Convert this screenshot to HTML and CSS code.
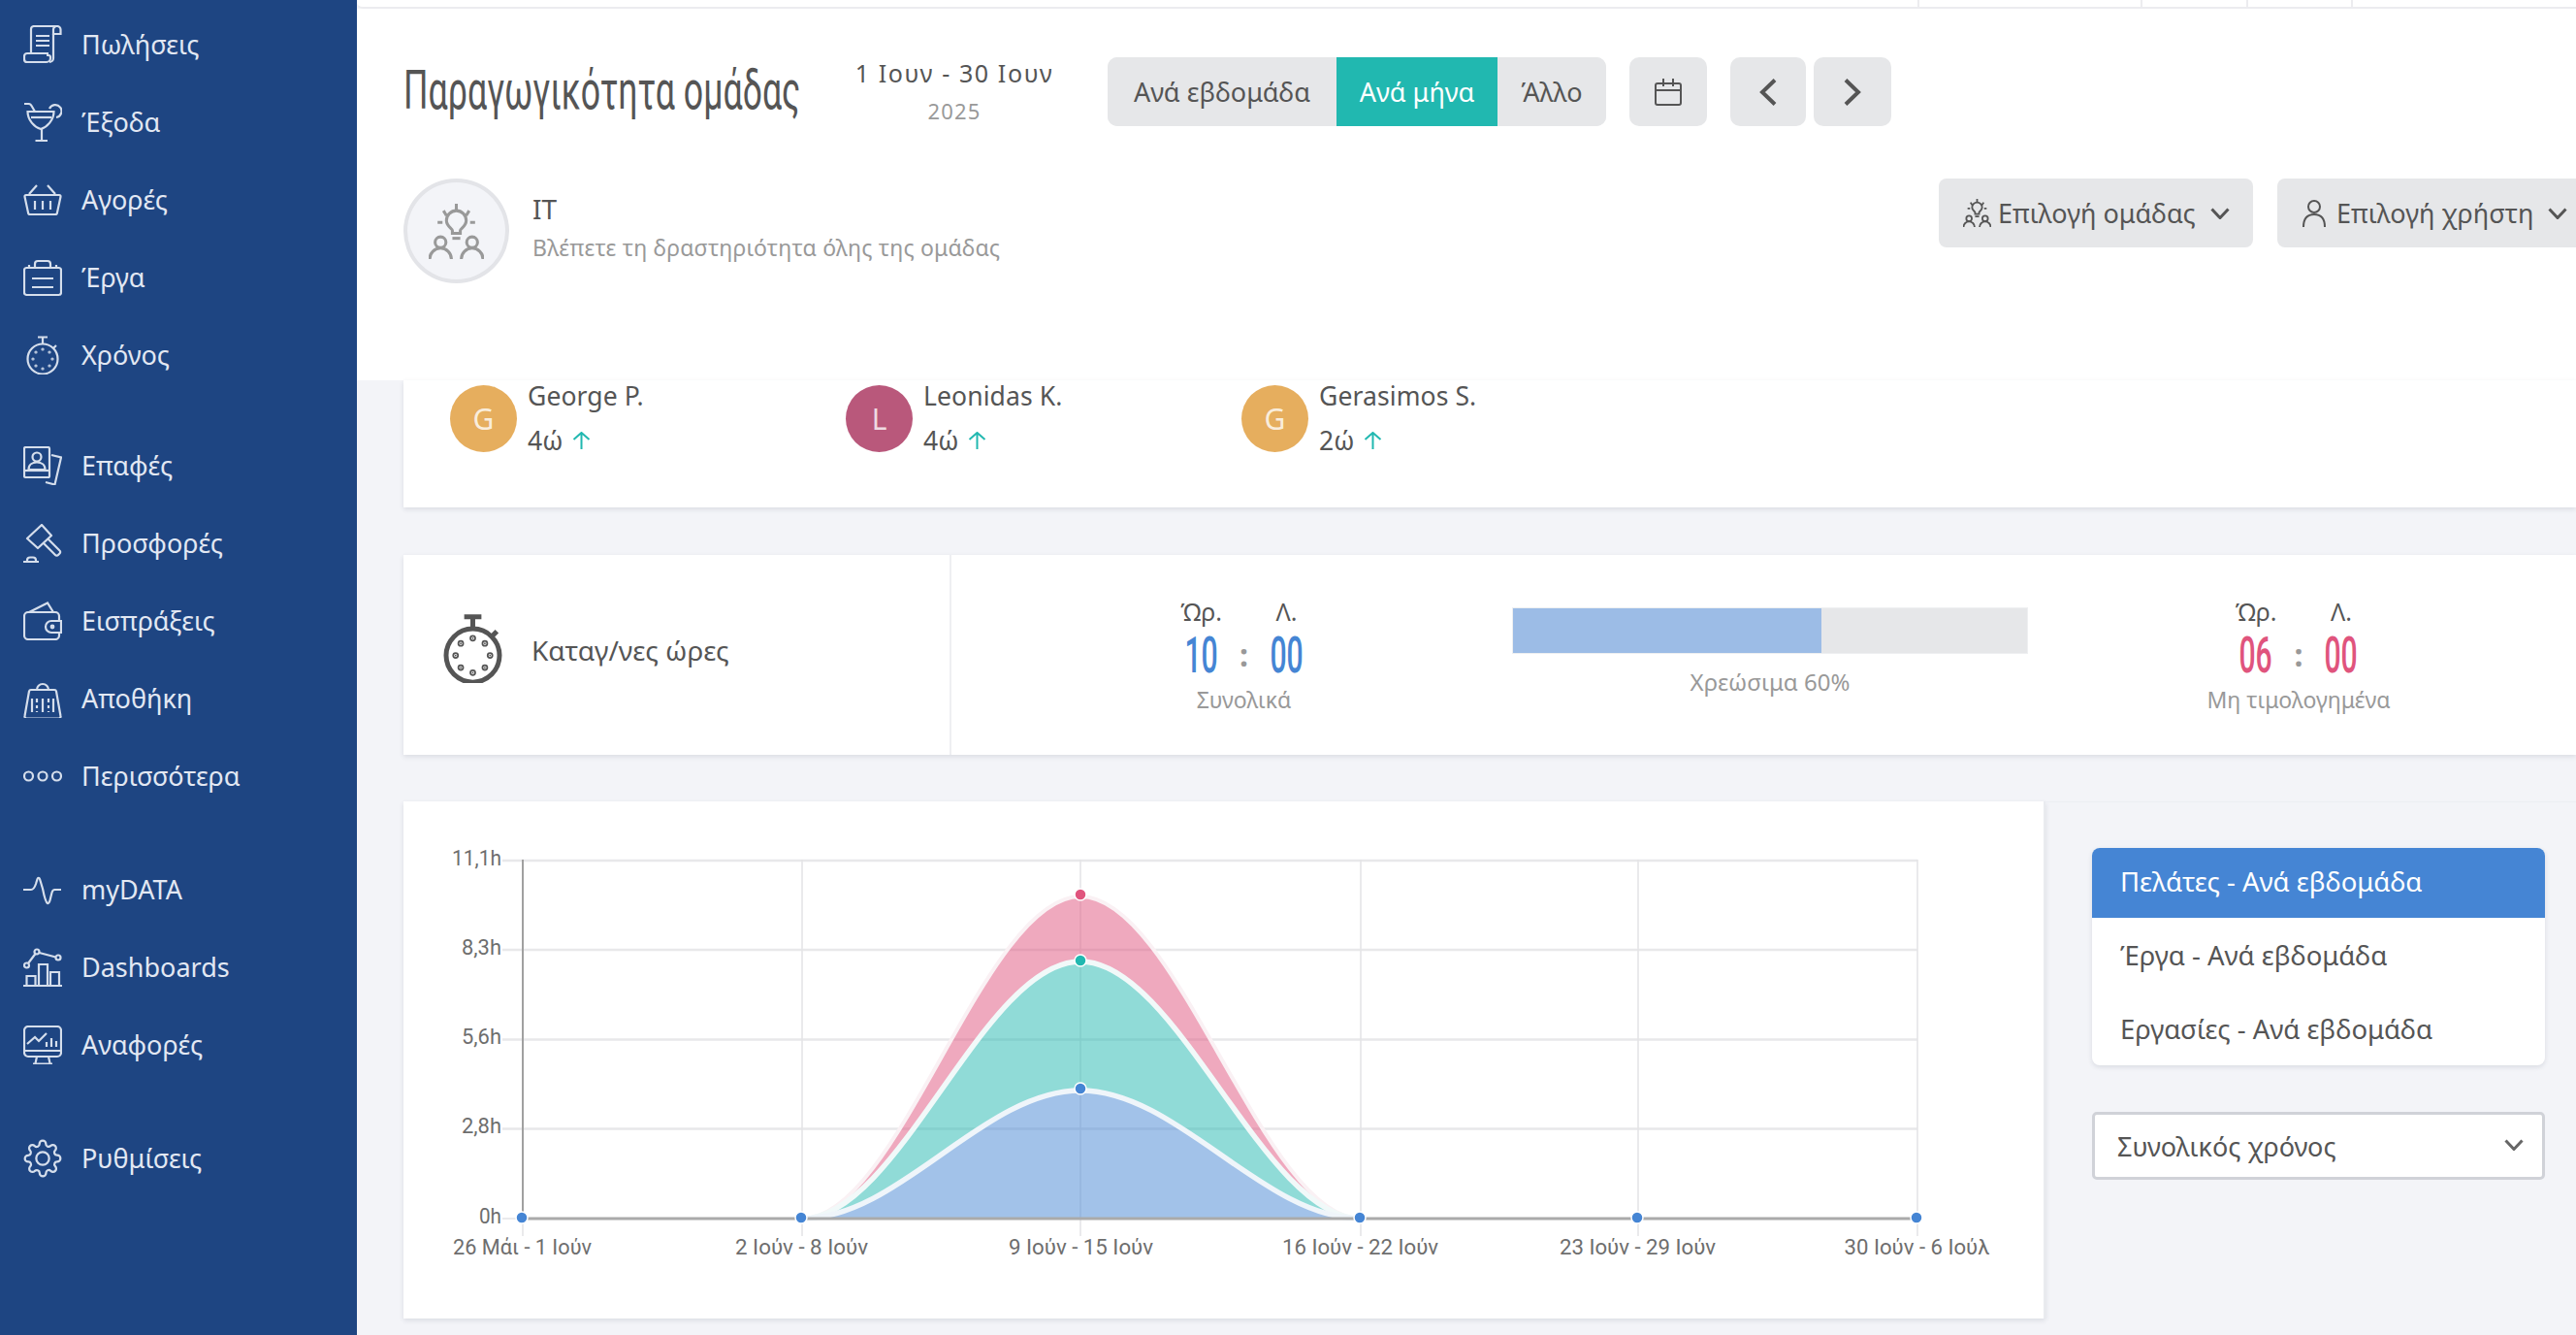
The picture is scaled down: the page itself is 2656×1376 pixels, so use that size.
FILE: index.html
```html
<!DOCTYPE html>
<html lang="el">
<head>
<meta charset="utf-8">
<title>Παραγωγικότητα ομάδας</title>
<link rel="stylesheet" href="styles.css">
</head>
<body>
<svg class="sprite" aria-hidden="true">
  <symbol id="i-scroll" viewBox="0 0 40 40"><path d="M8 28V4a3 3 0 0 1 3-3h24a3.5 3.5 0 0 1 3.5 3.5V9H31V4.5A3.5 3.5 0 0 1 35 1"/><path d="M31 9v25a4 4 0 0 1-4 4"/><path d="M26 29H4a3 3 0 0 0-3 3v3a3 3 0 0 0 3 3h20a4 4 0 0 0 4-4v-1a2 2 0 0 0-2-2h-2"/><path d="M13 11h14M13 16h14M13 21h14"/></symbol>
  <symbol id="i-cocktail" viewBox="0 0 40 40"><path d="M1 1h4a4 4 0 0 1 3.500 2l3.500 6"/><path d="M4.500 9h27c0 9-7 16-13.500 18C11.500 25 4.500 18 4.500 9z"/><path d="M8 15h21"/><path d="M19 27v12M12.500 39h12.500"/><path d="M27 6a6.500 6.500 0 1 1 7 9"/></symbol>
  <symbol id="i-basket" viewBox="0 0 40 40"><path d="M14 5L6 14M25 5l8 9"/><path d="M3 15h34a1.500 1.500 0 0 1 1.500 1.800L35 33a2 2 0 0 1-2 2H7a2 2 0 0 1-2-2L1.500 16.800A1.500 1.500 0 0 1 3 15z"/><path d="M12 21v9M20 21v9M28 21v9"/></symbol>
  <symbol id="i-case" viewBox="0 0 40 40"><rect x="1" y="10" width="38" height="28" rx="2.500"/><path d="M12 10V6a3 3 0 0 1 3-3h10a3 3 0 0 1 3 3v4"/><path d="M6 7v3M34 7v3M9 21h22M9 30h22"/></symbol>
  <symbol id="i-timer" viewBox="0 0 40 40"><circle cx="20" cy="24" r="15.500"/><path d="M15 1.500h10M20 1.500v7M31 13l3-3"/><g fill="currentColor"><circle cx="20" cy="14" r=".5"/><circle cx="27" cy="17" r=".5"/><circle cx="30" cy="24" r=".5"/><circle cx="27" cy="31" r=".5"/><circle cx="20" cy="34" r=".5"/><circle cx="13" cy="31" r=".5"/><circle cx="10" cy="24" r=".5"/><circle cx="13" cy="17" r=".5"/></g></symbol>
  <symbol id="i-contacts" viewBox="0 0 40 40"><rect x="1" y="1" width="26" height="31" rx="1.500"/><circle cx="14" cy="11" r="4.500"/><path d="M5.500 24c0-5 4-7.500 8.500-7.500s8.500 2.500 8.500 7.500z"/><path d="M1 25h26"/><path d="M29 9l10 2.500-6.500 28-9.500-2.500"/></symbol>
  <symbol id="i-gavel" viewBox="0 0 40 40"><path d="M19 1l10 11-14 13L4 15z" stroke-linejoin="round"/><path d="M21 20l12 12a2 2 0 0 0 3 0l1.500-1.500a2 2 0 0 0 0-3L25 15"/><path d="M0 39h16M4 39v-1.500a3 3 0 0 1 3-3h3a3 3 0 0 1 3 3V39"/></symbol>
  <symbol id="i-wallet" viewBox="0 0 40 40"><path d="M37 20v-5a4 4 0 0 0-4-4H5a4 4 0 0 0-4 4v20a4 4 0 0 0 4 4h28a4 4 0 0 0 4-4v-3"/><path d="M39 20H29a6 6 0 0 0 0 12h10z"/><circle cx="30" cy="26" r="1.300"/><path d="M6 11L25 1.500 31 11"/></symbol>
  <symbol id="i-store" viewBox="0 0 40 40"><path d="M14 11a6 6 0 0 1 12 0"/><path d="M8 11h24a2 2 0 0 1 2 1.500L38.500 38a2 2 0 0 1-2 2.500h-33a2 2 0 0 1-2-2.500L6 12.500A2 2 0 0 1 8 11z"/><path d="M9 20v14M14 20v4M14 27v3M14 33v1M20 20v14M26 20v4M26 27v3M26 33v1M31 20v14"/></symbol>
  <symbol id="i-dots" viewBox="0 0 40 40"><circle cx="5.500" cy="20" r="4.500"/><circle cx="20" cy="20" r="4.500"/><circle cx="34.500" cy="20" r="4.500"/></symbol>
  <symbol id="i-pulse" viewBox="0 0 40 40"><path d="M0 20h8c3 0 4-3 5-6l1.500-5c.5-1.500 2-1.500 2.500 0l3 10c1 5 3 14 5 15 1 .5 2-1 2.500-3l2-8c.5-2 1-3 3-3h6.500"/></symbol>
  <symbol id="i-dash" viewBox="0 0 40 40"><path d="M0 39h40"/><path d="M3.500 39V29h9v10M16 39V17h9v22M28 39V25h9v14"/><circle cx="3.500" cy="18" r="2.500"/><circle cx="14" cy="4" r="2.500"/><circle cx="36" cy="10" r="2.500"/><path d="M5 16l7.500-10M16.500 5L33.500 9.500"/></symbol>
  <symbol id="i-report" viewBox="0 0 40 40"><rect x="1" y="1" width="38" height="31" rx="4"/><path d="M1 26h38M14 32l-1.500 7M26 32l1.500 7M10 39.500h20"/><path d="M4 19l8-7 4 4 8-8"/><path d="M24 22v-5M29 22v-9M34 22v-6"/></symbol>
  <symbol id="i-gear" viewBox="0 0 24 24"><circle cx="12" cy="12" r="4"/><path d="M19.400 15a1.650 1.650 0 0 0 .33 1.820l.06.06a2 2 0 0 1 0 2.830 2 2 0 0 1-2.830 0l-.06-.06a1.650 1.650 0 0 0-1.820-.33 1.650 1.650 0 0 0-1 1.510V21a2 2 0 0 1-2 2 2 2 0 0 1-2-2v-.09A1.650 1.650 0 0 0 9 19.400a1.650 1.650 0 0 0-1.820.33l-.06.06a2 2 0 0 1-2.830 0 2 2 0 0 1 0-2.830l.06-.06a1.650 1.650 0 0 0 .33-1.820 1.650 1.650 0 0 0-1.510-1H3a2 2 0 0 1-2-2 2 2 0 0 1 2-2h.09A1.650 1.650 0 0 0 4.600 9a1.650 1.650 0 0 0-.33-1.820l-.06-.06a2 2 0 0 1 0-2.830 2 2 0 0 1 2.830 0l.06.06a1.650 1.650 0 0 0 1.820.33H9a1.650 1.650 0 0 0 1-1.510V3a2 2 0 0 1 2-2 2 2 0 0 1 2 2v.09a1.650 1.650 0 0 0 1 1.510 1.650 1.650 0 0 0 1.820-.33l.06-.06a2 2 0 0 1 2.830 0 2 2 0 0 1 0 2.830l-.06.06a1.650 1.650 0 0 0-.33 1.820V9a1.650 1.650 0 0 0 1.510 1H21a2 2 0 0 1 2 2 2 2 0 0 1-2 2h-.09a1.650 1.650 0 0 0-1.510 1z"/></symbol>
  <symbol id="i-team" viewBox="0 0 56 56"><path d="M28 0v6M15 7l3 5M41 7l-3 5M9 19h5M42 19h5"/><path d="M24 30v-3c0-2-6-4-6-10a10 10 0 0 1 20 0c0 6-6 8-6 10v3z"/><path d="M24 35h8"/><circle cx="12" cy="39" r="5.500"/><circle cx="44" cy="39" r="5.500"/><path d="M1 56c0-6 5-11 11-11s11 5 11 11M33 56c0-6 5-11 11-11s11 5 11 11"/></symbol>
  <symbol id="i-chev" viewBox="0 0 20 12"><path d="M1.500 1.500L10 10.500l8.500-9"/></symbol>
</svg>

<div class="app">
  <nav class="sidebar">
    <div class="nav-group first">
      <a class="nav-item"><svg class="ico"><use href="#i-scroll"/></svg><span>Πωλήσεις</span></a>
      <a class="nav-item"><svg class="ico"><use href="#i-cocktail"/></svg><span>Έξοδα</span></a>
      <a class="nav-item"><svg class="ico"><use href="#i-basket"/></svg><span>Αγορές</span></a>
      <a class="nav-item"><svg class="ico"><use href="#i-case"/></svg><span>Έργα</span></a>
      <a class="nav-item"><svg class="ico"><use href="#i-timer"/></svg><span>Χρόνος</span></a>
    </div>
    <div class="nav-group second">
      <a class="nav-item"><svg class="ico"><use href="#i-contacts"/></svg><span>Επαφές</span></a>
      <a class="nav-item"><svg class="ico"><use href="#i-gavel"/></svg><span>Προσφορές</span></a>
      <a class="nav-item"><svg class="ico"><use href="#i-wallet"/></svg><span>Εισπράξεις</span></a>
      <a class="nav-item"><svg class="ico"><use href="#i-store"/></svg><span>Αποθήκη</span></a>
      <a class="nav-item"><svg class="ico"><use href="#i-dots"/></svg><span>Περισσότερα</span></a>
    </div>
    <div class="nav-group third">
      <a class="nav-item"><svg class="ico"><use href="#i-pulse"/></svg><span>myDATA</span></a>
      <a class="nav-item"><svg class="ico"><use href="#i-dash"/></svg><span>Dashboards</span></a>
      <a class="nav-item"><svg class="ico"><use href="#i-report"/></svg><span>Αναφορές</span></a>
    </div>
    <div class="nav-group third">
      <a class="nav-item"><svg class="ico ico-gear"><use href="#i-gear"/></svg><span>Ρυθμίσεις</span></a>
    </div>
  </nav>

  <main class="main">
    <div class="topbar">
      <div class="topcell w230"></div>
      <div class="topcell w109"></div>
      <div class="topcell w108"></div>
      <div class="topcell w232"></div>
    </div>

    <header class="header">
      <div class="hrow">
        <div class="title-box"><h1 class="title">Παραγωγικότητα ομάδας</h1></div>
        <div class="period">
          <div class="period-range">1 Ιουν - 30 Ιουν</div>
          <div class="period-year">2025</div>
        </div>
        <div class="seg">
          <button class="seg-btn">Ανά εβδομάδα</button>
          <button class="seg-btn active">Ανά μήνα</button>
          <button class="seg-btn">Άλλο</button>
        </div>
        <button class="btn btn-cal"><svg class="cal" viewBox="0 0 28 28"><rect x="1" y="5" width="26" height="22" rx="2"/><path d="M1 12h26M9 0v8M19 0v8"/></svg></button>
        <button class="btn btn-prev"><svg class="arrow" viewBox="0 0 18 28"><path d="M16 1.500L3 14l13 12.500"/></svg></button>
        <button class="btn btn-next"><svg class="arrow" viewBox="0 0 18 28"><path d="M2 1.500L15 14 2 26.500"/></svg></button>
      </div>
      <div class="hrow second">
        <div class="team-badge"><svg class="team-ico"><use href="#i-team"/></svg></div>
        <div class="team-info">
          <div class="team-name">IT</div>
          <div class="team-desc">Βλέπετε τη δραστηριότητα όλης της ομάδας</div>
        </div>
        <div class="pick-group">
          <button class="pick"><svg class="pick-team"><use href="#i-team"/></svg><span>Επιλογή ομάδας</span><svg class="chev"><use href="#i-chev"/></svg></button>
          <button class="pick"><svg class="pick-user" viewBox="0 0 24 28"><circle cx="12" cy="7" r="6"/><path d="M1 28c0-10 5-13 11-13s11 3 11 13"/></svg><span>Επιλογή χρήστη</span><svg class="chev"><use href="#i-chev"/></svg></button>
        </div>
      </div>
    </header>

    <section class="content">
      <div class="card people">
        <div class="person"><div class="avatar amber">G</div><div class="pinfo"><div>George P.</div><div class="hours">4ώ<svg class="up" viewBox="0 0 19 18"><path d="M9.500 18V1M1.500 8l8-7 8 7"/></svg></div></div></div>
        <div class="person"><div class="avatar plum">L</div><div class="pinfo"><div>Leonidas K.</div><div class="hours">4ώ<svg class="up" viewBox="0 0 19 18"><path d="M9.500 18V1M1.500 8l8-7 8 7"/></svg></div></div></div>
        <div class="person"><div class="avatar amber">G</div><div class="pinfo"><div>Gerasimos S.</div><div class="hours">2ώ<svg class="up" viewBox="0 0 19 18"><path d="M9.500 18V1M1.500 8l8-7 8 7"/></svg></div></div></div>
      </div>

      <div class="card stats">
        <div class="stat-label"><svg class="ico stat-ico"><use href="#i-timer"/></svg><span class="stat-text">Καταγ/νες ώρες</span></div>
        <div class="time time-total">
          <div class="tl">Ώρ.</div><div></div><div class="tl">Λ.</div>
          <div class="tv blue"><span>10</span></div><div class="colon">:</div><div class="tv blue"><span>00</span></div>
          <div class="tc">Συνολικά</div>
        </div>
        <div class="billable">
          <div class="track"><div class="fill" style="width:60%"></div></div>
          <div class="bar-cap">Χρεώσιμα 60%</div>
        </div>
        <div class="time time-unbilled">
          <div class="tl">Ώρ.</div><div></div><div class="tl">Λ.</div>
          <div class="tv red"><span>06</span></div><div class="colon">:</div><div class="tv red"><span>00</span></div>
          <div class="tc">Μη τιμολογημένα</div>
        </div>
      </div>

      <div class="chart-row">
        <div class="chart-card">
          <svg class="chart" viewBox="416 826 1691 533">
            <g class="grid-h">
              <path d="M518 887H1977M518 979H1977M518 1071.500H1977M518 1163.500H1977"/>
            </g>
            <g class="grid-v">
              <path d="M539 1256V1274M827 886V1274M1114 886V1274M1403 886V1274M1689 886V1274M1977 886V1274M518 1256H539"/>
            </g>
            <path class="area a-blue" d="M827 1256C927 1256 1014 1124 1114 1124C1214 1124 1303 1256 1403 1256Z"/>
            <path class="area a-teal" d="M827 1256C927 1256 1014 991 1114 991C1214 991 1303 1256 1403 1256C1303 1256 1214 1124 1114 1124C1014 1124 927 1256 827 1256Z"/>
            <path class="area a-pink" d="M827 1256C927 1256 1014 924 1114 924C1214 924 1303 1256 1403 1256C1303 1256 1214 991 1114 991C1014 991 927 1256 827 1256Z"/>
            <path class="cline l-pink" d="M827 1256C927 1256 1014 924 1114 924C1214 924 1303 1256 1403 1256"/>
            <path class="cline l-teal" d="M827 1256C927 1256 1014 991 1114 991C1214 991 1303 1256 1403 1256"/>
            <path class="cline l-blue" d="M827 1256C927 1256 1014 1124 1114 1124C1214 1124 1303 1256 1403 1256"/>
            <path class="axis" d="M539 886V1256"/>
            <path class="baseline" d="M539 1256H1977"/>
            <g class="dot d-blue"><circle cx="538" cy="1255" r="6"/><circle cx="826" cy="1255" r="6"/><circle cx="1402" cy="1255" r="6"/><circle cx="1688" cy="1255" r="6"/><circle cx="1976" cy="1255" r="6"/><circle cx="1114" cy="1122" r="6"/></g>
            <g class="dot d-teal"><circle cx="1114" cy="990" r="6"/></g>
            <g class="dot d-red"><circle cx="1114" cy="922" r="6"/></g>
            <g class="ylab">
              <text x="517" y="892" textLength="51" lengthAdjust="spacingAndGlyphs">11,1h</text>
              <text x="517" y="984" textLength="41" lengthAdjust="spacingAndGlyphs">8,3h</text>
              <text x="517" y="1076" textLength="41" lengthAdjust="spacingAndGlyphs">5,6h</text>
              <text x="517" y="1168" textLength="41" lengthAdjust="spacingAndGlyphs">2,8h</text>
              <text x="517" y="1261" textLength="23" lengthAdjust="spacingAndGlyphs">0h</text>
            </g>
            <g class="xlab">
              <text x="538.500" y="1293" textLength="143" lengthAdjust="spacingAndGlyphs">26 Μάι - 1 Ιούν</text>
              <text x="826.500" y="1293" textLength="137" lengthAdjust="spacingAndGlyphs">2 Ιούν - 8 Ιούν</text>
              <text x="1114.500" y="1293" textLength="149" lengthAdjust="spacingAndGlyphs">9 Ιούν - 15 Ιούν</text>
              <text x="1402.500" y="1293" textLength="161" lengthAdjust="spacingAndGlyphs">16 Ιούν - 22 Ιούν</text>
              <text x="1688.500" y="1293" textLength="161" lengthAdjust="spacingAndGlyphs">23 Ιούν - 29 Ιούν</text>
              <text x="1976.500" y="1293" textLength="150" lengthAdjust="spacingAndGlyphs">30 Ιούν - 6 Ιούλ</text>
            </g>
          </svg>
        </div>
        <aside class="side">
          <div class="tabs">
            <div class="tab active">Πελάτες - Ανά εβδομάδα</div>
            <div class="tab">Έργα - Ανά εβδομάδα</div>
            <div class="tab">Εργασίες - Ανά εβδομάδα</div>
          </div>
          <div class="select"><span>Συνολικός χρόνος</span><svg class="chev"><use href="#i-chev"/></svg></div>
        </aside>
      </div>
    </section>
  </main>
</div>
</body>
</html>
```

FILE: styles.css
```css
* { box-sizing: border-box; }
html, body { margin: 0; height: 100%; overflow: hidden; }
body { font-family: "Noto Sans", "Open Sans", sans-serif; color: #555; background: #f3f4f8; }
.sprite { display: none; }
button { font: inherit; color: inherit; border: 0; padding: 0; cursor: pointer; }

.app { display: flex; width: 2656px; height: 1376px; overflow: hidden; }

/* sidebar */
.sidebar { flex: 0 0 368px; background: #1e4582; color: #e2e8f3; }
.nav-group.first { padding-top: 6px; }
.nav-group.second { margin-top: 34px; }
.nav-group.third { margin-top: 37px; }
.nav-item { display: flex; align-items: center; height: 80px; padding-left: 24px; gap: 21px; font-size: 27px; }
.nav-item span { margin-left: -1px; margin-top: -2px; }
.ico { width: 40px; height: 40px; flex: none; fill: none; stroke: currentColor; stroke-width: 2.2; color: #d5deec; }
.ico-gear { stroke-width: 1.35; }

/* main */
.main { flex: 1; min-width: 0; background: #f3f4f8; }
.topbar { display: flex; justify-content: flex-end; height: 9px; background: #fff; border-bottom: 2px solid #ececef; border-bottom-left-radius: 6px; }
.topcell { border-left: 2px solid #ececef; }
.w230 { width: 230px; }
.w109 { width: 109px; }
.w108 { width: 108px; }
.w232 { width: 232px; }

.header { height: 383px; background: #fff; padding: 50px 0 0 48px; }
.hrow { display: flex; align-items: center; height: 71px; }
.hrow.second { align-items: flex-start; height: 108px; margin-top: 54px; }

.title-box { width: 448px; overflow: visible; }
.title { display: inline-block; margin: -3px 0 0; font: 400 56px/1 Roboto, sans-serif; color: #555; white-space: nowrap; transform: scaleX(.638); transform-origin: left center; }
.period { width: 240px; text-align: center; margin-right: 38px; }
.period-range { font-size: 25px; line-height: 34px; letter-spacing: 1.6px; color: #555; margin-top: -2px; }
.period-year { font-size: 22px; line-height: 30px; color: #999; margin-top: 7px; letter-spacing: 1.2px; }

.seg { display: grid; grid-template-columns: 236px 166px 112px; height: 71px; border-radius: 10px; overflow: hidden; background: #e6e7e9; }
.seg-btn { background: #e6e7e9; font-size: 27px; }
.seg-btn.active { background: #21b8b0; color: #fff; }
.btn { display: flex; align-items: center; justify-content: center; height: 71px; border-radius: 10px; background: #e6e7e9; }
.btn-cal { width: 80px; margin-left: 24px; }
.btn-prev { width: 78px; margin-left: 24px; }
.btn-next { width: 80px; margin-left: 8px; }
.cal { width: 28px; height: 28px; fill: none; stroke: #555; stroke-width: 2; }
.arrow { width: 18px; height: 28px; fill: none; stroke: #555; stroke-width: 4; }

.team-badge { flex: none; display: flex; align-items: center; justify-content: center; width: 109px; height: 108px; border-radius: 50%; background: #f3f4f8; border: 4px solid #e3e4e8; }
.team-ico { width: 57px; height: 57px; fill: none; stroke: #999; stroke-width: 3; }
.team-info { flex: none; width: 1474px; padding: 12px 0 0 24px; white-space: nowrap; }
.team-name { font-size: 28px; line-height: 38px; color: #555; }
.team-desc { font-size: 23px; line-height: 32px; color: #999; margin-top: 5px; letter-spacing: .2px; }
.pick-group { display: flex; gap: 25px; flex: none; }
.pick { flex: none; display: flex; align-items: center; height: 71px; border-radius: 8px; background: #e6e7e9; font-size: 27px; white-space: nowrap; }
.pick:first-child { width: 324px; padding-left: 25px; }
.pick:last-child { width: 340px; padding-left: 26px; }
.pick-team { width: 29px; height: 29px; fill: none; stroke: #555; stroke-width: 3.5; margin-right: 7px; flex: none; }
.pick-user { width: 24px; height: 28px; fill: none; stroke: #555; stroke-width: 2; margin-right: 11px; flex: none; }
.chev { width: 20px; height: 12px; flex: none; fill: none; stroke: #555; stroke-width: 3; margin-left: 15px; }

/* content */
.content { padding-left: 48px; }
.card { background: #fff; box-shadow: 0 2px 5px rgba(40, 50, 70, .12); }
.people { display: flex; height: 131px; padding: 5px 0 0 48px; }
.person { display: flex; width: 408px; gap: 11px; }
.avatar { width: 69px; height: 69px; border-radius: 50%; display: flex; align-items: center; justify-content: center; color: rgba(255, 255, 255, .8); font-size: 30px; }
.amber { background: #e6ae5e; }
.plum { background: #b9587b; }
.pinfo { display: flex; flex-direction: column; gap: 20px; margin-top: -1px; font-size: 26.5px; line-height: 24px; letter-spacing: .1px; color: #555; }
.hours { display: flex; align-items: center; gap: 9px; margin-top: 2px; }
.up { width: 19px; height: 18px; fill: none; stroke: #21b8b0; stroke-width: 2; }

.stats { display: flex; height: 206px; margin-top: 49px; }
.stat-label { display: flex; align-items: center; width: 565px; flex: none; height: 100%; padding-left: 36px; gap: 25px; border-right: 2px solid #eeeff2; font-size: 28px; color: #555; }
.stat-ico { width: 71px; height: 71px; margin-top: -14px; stroke-width: 2.8; color: #555; }
.stat-text { margin-top: -11px; }

.time { display: grid; grid-template-columns: 44px 44px 44px; grid-template-rows: 30px 46px 30px; row-gap: 7px; justify-content: center; justify-items: center; align-content: center; width: 503px; flex: none; }
.time-total { margin-left: 50px; }
.time-unbilled { margin-left: 79px; width: 400px; }
.tl { font-size: 25px; line-height: 30px; color: #555; white-space: nowrap; }
.tv { line-height: 46px; padding-top: 1px; }
.tv span { display: inline-block; font: 500 52px/46px Roboto, sans-serif; transform: scaleX(.58); }
.blue { color: #4585d4; }
.red { color: #e0547d; }
.colon { font-size: 32px; line-height: 46px; color: #999; font-weight: 700; }
.tc { grid-column: 1 / -1; font-size: 23px; line-height: 30px; color: #999; white-space: nowrap; margin-top: 1px; }

.billable { width: 532px; flex: none; margin-left: 25px; margin-top: 54px; }
.time-total + .billable { align-self: flex-start; }
.track { height: 48px; background: #e6e7e9; border: 1px solid #eeeff1; }
.fill { height: 100%; background: #9cbce6; }
.bar-cap { margin-top: 15px; font-size: 24px; line-height: 28px; color: #999; text-align: center; }

/* chart */
.chart-row { display: flex; height: 533px; margin-top: 48px; }
.chart-card { width: 1693px; flex: none; background: #fff; border-right: 2px solid #e9ebef; box-shadow: 0 2px 5px rgba(40, 50, 70, .12); }
.chart { display: block; width: 1691px; height: 533px; }
.grid-h path { fill: none; stroke: #e8e8ea; stroke-width: 2.5; }
.grid-v path { fill: none; stroke: #e4e4e6; stroke-width: 1.5; }
.area { stroke: none; fill-opacity: .5; }
.a-blue { fill: #4585d4; }
.a-teal { fill: #21b8b0; }
.a-pink { fill: #e0547d; }
.cline { fill: none; }
.l-blue { stroke: #eff5fa; stroke-width: 5.5; }
.l-teal { stroke: #f1f9f9; stroke-width: 5.5; }
.l-pink { stroke: #faf1f4; stroke-width: 4; }
.axis { fill: none; stroke: #a0a0a0; stroke-width: 2; }
.baseline { fill: none; stroke: #aaa; stroke-width: 3; }
.dot circle { stroke: #fff; stroke-width: 1.5; }
.d-blue { fill: #4585d4; }
.d-teal { fill: #21b8b0; }
.d-red { fill: #e0547d; }
.ylab text { font: 400 22px Roboto, sans-serif; fill: #6e6e6e; text-anchor: end; }
.xlab text { font: 400 22px Roboto, sans-serif; fill: #6e6e6e; text-anchor: middle; }

.side { flex: 1; padding: 47px 0 0 48px; border-top: 1px solid #eceef3; }
.tabs { width: 467px; height: 224px; border-radius: 8px; background: #fff; overflow: hidden; box-shadow: 0 2px 5px rgba(40, 50, 70, .12); }
.tab { display: flex; align-items: center; height: 76px; padding-left: 29px; font-size: 27.5px; color: #555; }
.tab.active { height: 72px; padding-bottom: 3px; background: #4585d4; color: #fff; }
.select { display: flex; align-items: center; justify-content: space-between; width: 467px; height: 70px; margin-top: 48px; padding: 0 19px 0 23px; background: #fff; border: 3px solid #d0d2d8; border-radius: 5px; font-size: 27px; color: #555; }
.select .chev { stroke: #666; stroke-width: 3; margin: 0 0 2px; }
```
